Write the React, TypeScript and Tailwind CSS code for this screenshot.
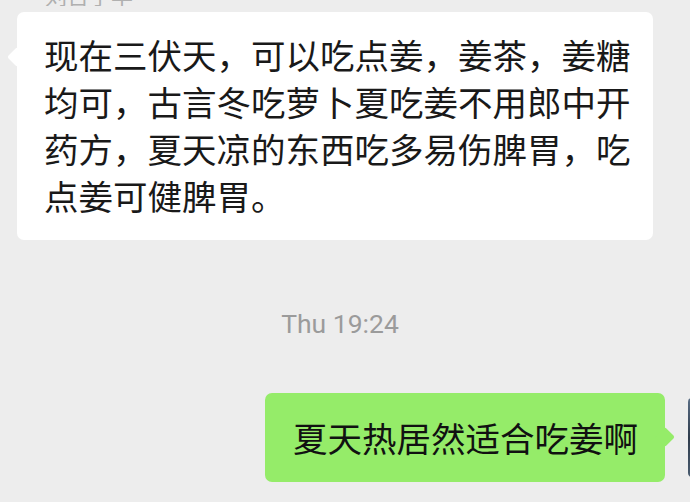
import React from "react";

export default function App() {
  const cjk = { fontFamily: '"Noto Sans CJK SC", "Noto Sans", sans-serif' };
  return (
    <div className="w-[690px] h-[502px] bg-[#ededed] overflow-hidden flex flex-col" style={cjk}>
      <div className="h-[6px] overflow-hidden pl-[45px] shrink-0">
        <div className="text-[22px] leading-[22px] text-[#b0b0b0] -mt-[17px]">刘吉子华</div>
      </div>
      <div className="mt-[6px] ml-[17px] shrink-0">
        <div className="relative w-[636px] bg-white rounded-[7px] pl-[27px] pr-[21px] pt-[19px] pb-[21px]">
          <div className="absolute left-[-7px] top-[38px] w-[14px] h-[14px] bg-white rotate-45 rounded-[2px]" />
          <p className="relative text-[34.5px] leading-[47px] text-[#191919]">
            现在三伏天，可以吃点姜，姜茶，姜糖均可，古言冬吃萝卜夏吃姜不用郎中开药方，夏天凉的东西吃多易伤脾胃，吃点姜可健脾胃。
          </p>
        </div>
      </div>
      <div
        className="mt-[69px] h-[30px] pr-[10px] text-center text-[26.5px] leading-[30px] text-[#9b9b9b] shrink-0"
        style={{ fontFamily: 'Roboto, "Noto Sans", sans-serif' }}
      >
        Thu 19:24
      </div>
      <div className="mt-[54px] pl-[265px] flex shrink-0">
        <div className="relative w-[400px] shrink-0 bg-[#95ec69] rounded-[7px] px-[28px] py-[21px]">
          <div className="absolute right-[-7px] top-[37px] w-[14px] h-[14px] bg-[#95ec69] rotate-45 rounded-[2px]" />
          <p className="relative text-[34.5px] leading-[47px] text-[#111] whitespace-nowrap">夏天热居然适合吃姜啊</p>
        </div>
        <div className="ml-[23px] mt-[5px] w-[80px] h-[79px] shrink-0 bg-gradient-to-b from-[#5a6e86] via-[#2f3c4c] to-[#4a5c70] rounded-[4px]" />
      </div>
    </div>
  );
}
